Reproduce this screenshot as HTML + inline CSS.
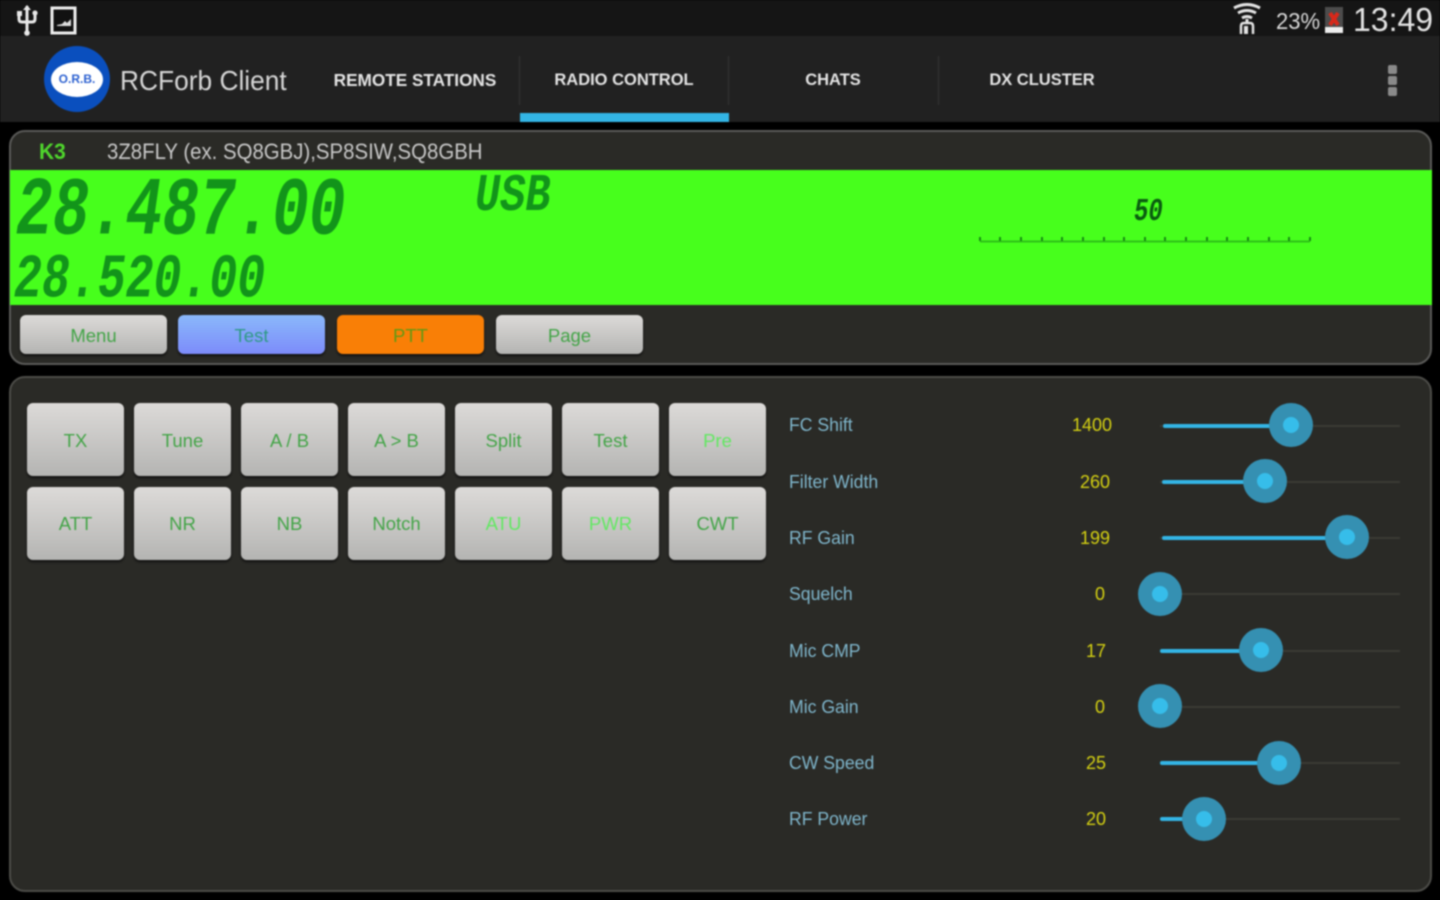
<!DOCTYPE html>
<html>
<head>
<meta charset="utf-8">
<title>RCForb Client</title>
<style>
html,body{margin:0;padding:0;width:1440px;height:900px;overflow:hidden;background:#000}
#r{position:absolute;left:0;top:0;width:1440px;height:900px;overflow:hidden;background:#000;font-family:"Liberation Sans",sans-serif;filter:blur(.8px)}
#r div,#r span,#r svg{position:absolute;display:block}
.tab{top:68px;height:24px;line-height:24px;font-size:17px;font-weight:bold;color:#e4e4e4;text-align:center;white-space:nowrap;transform:scaleX(.97)}
.sep{top:56px;width:1px;height:49px;background:#333}
.lcd{font-family:"Liberation Mono",monospace;font-style:italic;font-weight:bold;color:#12941a;line-height:1;white-space:nowrap;transform-origin:0 0}
.b{border-radius:6px;background:linear-gradient(#dcdad8,#b4b4b2);box-shadow:0 2px 2px #111;text-align:center;color:#43a447;font-size:19px}
.s{width:147px;height:39px;top:315px;line-height:41px;font-size:18.5px}
.g{width:97px;height:73px;font-size:18.5px}
.r1{top:403px;line-height:76px}
.r2{top:487px;line-height:74px}
.l{left:789px;font-size:18px;line-height:22px;color:#7fb6cc;white-space:nowrap;transform:scaleX(.98);transform-origin:0 0}
.v{width:60px;font-size:18px;line-height:22px;text-align:right;color:#d4d012}
.t{height:2px;background:#3a3a34;left:1160px;width:240px}
.f{height:4px;background:#33b5e5;border-radius:2px}
.th{width:44px;height:44px;border-radius:50%;background:#3590b2}
.th span{left:14px;top:14px;width:16px;height:16px;border-radius:50%;background:#36bdea}
</style>
</head>
<body>
<div id="r">
<div style="left:0;top:0;width:1440px;height:36px;background:#151515"></div>
<div style="left:0;top:36px;width:1440px;height:86px;background:#212121"></div>

<svg style="left:16px;top:5px" width="22" height="31" viewBox="0 0 22 31"><path d="M11 1v27M3 9v5q0 3 3 3h10q3 0 3-3V9" fill="none" stroke="#e8e8e8" stroke-width="3"/><path d="M11 0l4 5H7z" fill="#e8e8e8"/><rect x="1" y="6" width="5" height="5" fill="#e8e8e8"/><circle cx="19" cy="8" r="2.6" fill="#e8e8e8"/><circle cx="11" cy="28" r="2.8" fill="#e8e8e8"/></svg>
<svg style="left:50px;top:5px" width="28" height="30" viewBox="0 0 28 30"><rect x="2" y="3" width="23" height="25" fill="#111" stroke="#eee" stroke-width="3"/><path d="M7 20l5-1 3-3 2 2 4-4v7H7z" fill="#ddd"/></svg>

<svg style="left:1232px;top:3px" width="30" height="32" viewBox="0 0 30 32"><path d="M2 5q13-7 26 0M6 10q9-5 18 0M10 15q5-3 10 0" fill="none" stroke="#e4e4e4" stroke-width="3"/><path d="M15 16v4" stroke="#e4e4e4" stroke-width="3"/><path d="M9 31v-8q0-3 3-3h6q3 0 3 3v8" fill="none" stroke="#e4e4e4" stroke-width="2.5"/><rect x="12" y="23" width="4" height="8" fill="#e4e4e4"/></svg>
<div style="left:1276px;top:8px;font-size:23px;line-height:26px;color:#d8d8d8;white-space:nowrap;transform:scaleX(.96);transform-origin:0 0">23%</div>
<div style="left:1325px;top:7px;width:18px;height:26px;background:#4c4c4c"></div>
<div style="left:1325px;top:27px;width:18px;height:6px;background:#eee"></div>
<svg style="left:1325px;top:10px" width="18" height="18" viewBox="0 0 18 18"><path d="M5 3l8 12M13 3L5 15" stroke="#d8281a" stroke-width="4"/></svg>
<div style="left:1353px;top:1px;font-size:33px;line-height:37px;color:#e4e4e4;white-space:nowrap;transform:scaleX(.97);transform-origin:0 0">13:49</div>

<div style="left:44px;top:46px;width:66px;height:66px;border-radius:50%;background:#0a4fbe"></div>
<div style="left:51px;top:62px;width:52px;height:35px;border-radius:50%;background:#fff"></div>
<div style="left:51px;top:71px;width:52px;text-align:center;font-size:12px;line-height:16px;font-weight:bold;color:#2a5fd0">O.R.B.</div>
<div style="left:120px;top:64px;font-size:28px;line-height:34px;color:#d6d6d6;white-space:nowrap;transform:scaleX(.94);transform-origin:0 0">RCForb Client</div>

<div class="tab" style="left:310px;width:210px;transform:none;font-size:17.2px">REMOTE STATIONS</div>
<div class="tab" style="left:520px;width:208px">RADIO CONTROL</div>
<div class="tab" style="left:729px;width:208px">CHATS</div>
<div class="tab" style="left:938px;width:208px">DX CLUSTER</div>
<div class="sep" style="left:519px"></div>
<div class="sep" style="left:728px"></div>
<div class="sep" style="left:938px"></div>
<div style="left:520px;top:113px;width:209px;height:9px;background:#33b5e5"></div>
<div style="left:1388px;top:65px;width:9px;height:9px;background:#8a8a8a;border-radius:2px"></div>
<div style="left:1388px;top:76px;width:9px;height:9px;background:#8a8a8a;border-radius:2px"></div>
<div style="left:1388px;top:87px;width:9px;height:9px;background:#8a8a8a;border-radius:2px"></div>

<div style="left:9px;top:130px;width:1419px;height:231px;border:2px solid #5a5a58;border-radius:16px;background:#2a2a26"></div>
<div style="left:39px;top:140px;font-size:22px;line-height:24px;font-weight:bold;color:#4fd62c;transform:scaleX(.95);transform-origin:0 0">K3</div>
<div style="left:107px;top:140px;font-size:22px;line-height:24px;color:#c8c8c8;white-space:nowrap;transform:scaleX(.927);transform-origin:0 0">3Z8FLY (ex. SQ8GBJ),SP8SIW,SQ8GBH</div>
<div style="left:10px;top:170px;width:1422px;height:135px;background:#47ff1c"></div>
<div class="lcd" style="left:16px;top:171px;font-size:61px;transform:scaleY(1.36)">28.487.00</div>
<div class="lcd" style="left:14px;top:250px;font-size:46.5px;transform:scaleY(1.33)">28.520.00</div>
<div class="lcd" style="left:475px;top:170px;font-size:42px;transform:scaleY(1.25)">USB</div>
<div class="lcd" style="left:1134px;top:198px;font-size:24px;color:#0a5c10;transform:scaleY(1.3)">50</div>
<svg style="left:978px;top:234px" width="334" height="10" viewBox="0 0 334 10"><path d="M2 7.5H332" stroke="#2fc218" stroke-width="2"/><path d="M2 3v4M22 3v4M43 3v4M64 3v4M84 3v4M105 3v4M126 3v4M146 3v4M167 3v4M187 3v4M208 3v4M229 3v4M249 3v4M270 3v4M291 3v4M311 3v4M332 3v4" stroke="#158a12" stroke-width="2"/></svg>

<div class="b s" style="left:20px">Menu</div>
<div class="b s" style="left:178px;background:linear-gradient(#8ab8fa,#7c8bfa);color:#2f9a86">Test</div>
<div class="b s" style="left:337px;background:#f97f06;color:#5f9a14">PTT</div>
<div class="b s" style="left:496px">Page</div>

<div style="left:9px;top:376px;width:1419px;height:512px;border:2px solid #4c4c48;border-radius:16px;background:#2a2a26"></div>

<div class="b g r1" style="left:27px">TX</div>
<div class="b g r1" style="left:134px">Tune</div>
<div class="b g r1" style="left:241px">A / B</div>
<div class="b g r1" style="left:348px">A &gt; B</div>
<div class="b g r1" style="left:455px">Split</div>
<div class="b g r1" style="left:562px">Test</div>
<div class="b g r1" style="left:669px;color:#62e862">Pre</div>
<div class="b g r2" style="left:27px">ATT</div>
<div class="b g r2" style="left:134px">NR</div>
<div class="b g r2" style="left:241px">NB</div>
<div class="b g r2" style="left:348px">Notch</div>
<div class="b g r2" style="left:455px;color:#62e862">ATU</div>
<div class="b g r2" style="left:562px;color:#62e862">PWR</div>
<div class="b g r2" style="left:669px">CWT</div>

<div class="l" style="top:414px">FC Shift</div>
<div class="l" style="top:471px">Filter Width</div>
<div class="l" style="top:527px">RF Gain</div>
<div class="l" style="top:583px">Squelch</div>
<div class="l" style="top:640px">Mic CMP</div>
<div class="l" style="top:696px">Mic Gain</div>
<div class="l" style="top:752px">CW Speed</div>
<div class="l" style="top:808px">RF Power</div>

<div class="v" style="left:1052px;top:414px">1400</div>
<div class="v" style="left:1050px;top:471px">260</div>
<div class="v" style="left:1050px;top:527px">199</div>
<div class="v" style="left:1045px;top:583px">0</div>
<div class="v" style="left:1046px;top:640px">17</div>
<div class="v" style="left:1045px;top:696px">0</div>
<div class="v" style="left:1046px;top:752px">25</div>
<div class="v" style="left:1046px;top:808px">20</div>

<div class="t" style="top:425px"></div>
<div class="t" style="top:481px"></div>
<div class="t" style="top:537px"></div>
<div class="t" style="top:593px"></div>
<div class="t" style="top:650px"></div>
<div class="t" style="top:706px"></div>
<div class="t" style="top:762px"></div>
<div class="t" style="top:818px"></div>

<div class="f" style="left:1163px;top:424px;width:128px"></div>
<div class="f" style="left:1162px;top:480px;width:103px"></div>
<div class="f" style="left:1162px;top:536px;width:185px"></div>
<div class="f" style="left:1160px;top:649px;width:101px"></div>
<div class="f" style="left:1160px;top:761px;width:119px"></div>
<div class="f" style="left:1160px;top:817px;width:44px"></div>

<div class="th" style="left:1269px;top:403px"><span></span></div>
<div class="th" style="left:1243px;top:459px"><span></span></div>
<div class="th" style="left:1325px;top:515px"><span></span></div>
<div class="th" style="left:1138px;top:572px"><span></span></div>
<div class="th" style="left:1239px;top:628px"><span></span></div>
<div class="th" style="left:1138px;top:684px"><span></span></div>
<div class="th" style="left:1257px;top:741px"><span></span></div>
<div class="th" style="left:1182px;top:797px"><span></span></div>
</div>
</body>
</html>
